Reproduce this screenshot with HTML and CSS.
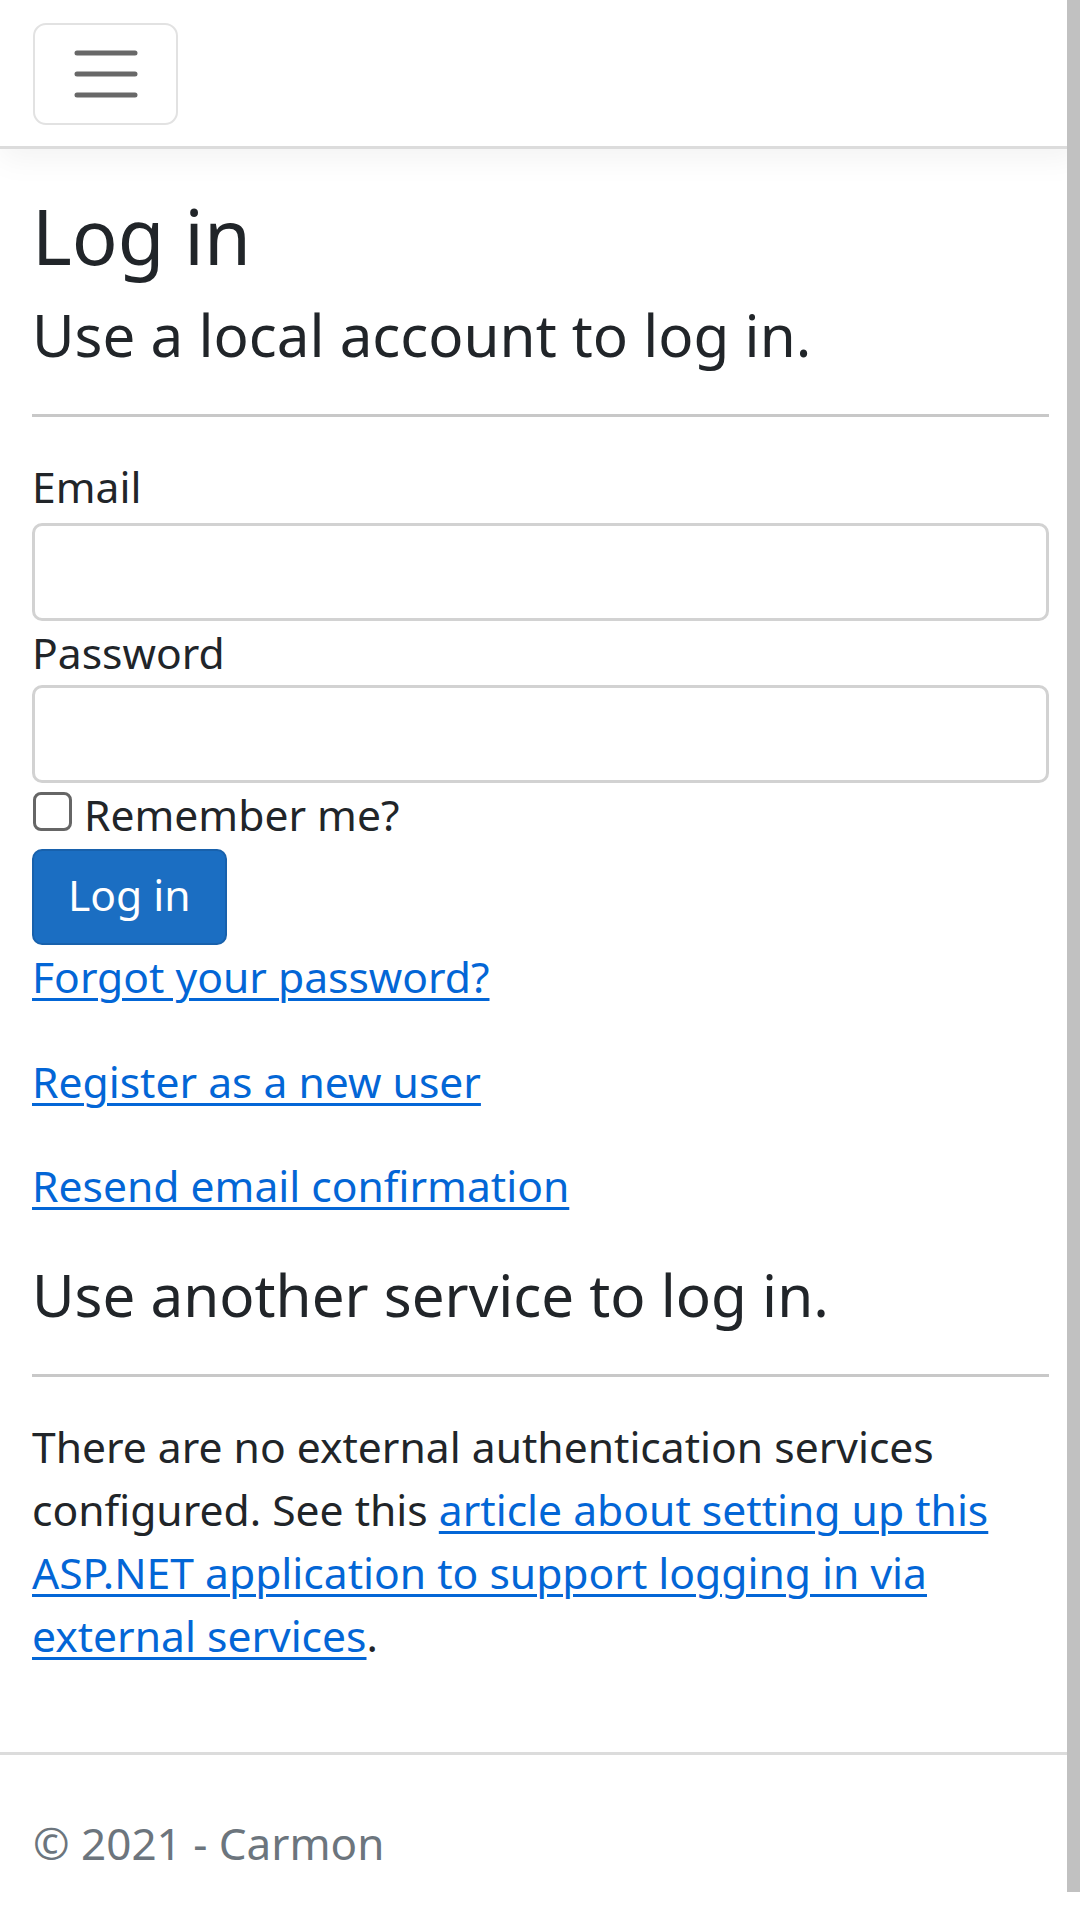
FILE: index.html
```html
<!DOCTYPE html>
<html lang="en">
  <head>
    <meta charset="UTF-8" />
    <meta name="viewport" content="width=device-width, initial-scale=1.0" />
    <title>Log in - Carmon</title>
    <link rel="stylesheet" href="styles.css">
  </head>
  <body>
    <nav class="navbar">
      <button class="navbar-toggler" type="button" aria-label="Toggle navigation">
        <svg width="64" height="52" viewBox="0 0 64 52">
          <path d="M3 5h58M3 26h58M3 47h58" stroke="#686868" stroke-width="5" stroke-linecap="round" />
        </svg>
      </button>
    </nav>

    <main class="container">
      <section class="local-login">
        <h1>Log in</h1>
        <h4>Use a local account to log in.</h4>
        <hr />
        <form onsubmit="event.preventDefault()">
          <label for="email" class="form-label">Email</label>
          <input type="email" id="email" class="form-control input-email" />
          <label for="password" class="form-label">Password</label>
          <input type="password" id="password" class="form-control input-password" />
          <div class="check-row">
            <input type="checkbox" id="remember" class="check-box" />
            <label for="remember">Remember me?</label>
          </div>
          <button type="submit" class="btn-primary">Log in</button>
          <p><a href="#">Forgot your password?</a></p>
          <p><a href="#">Register as a new user</a></p>
          <p><a href="#">Resend email confirmation</a></p>
        </form>
      </section>

      <section class="external-login">
        <h4>Use another service to log in.</h4>
        <hr />
        <p class="no-services">
          There are no external authentication services configured. See this
          <a href="#">article about setting up this ASP.NET application to support logging in via external services</a>.
        </p>
      </section>
    </main>

    <footer class="footer">&copy; 2021 - Carmon</footer>

    <div class="scroll-thumb"></div>
  </body>
</html>
```

FILE: styles.css
```css
* {
  box-sizing: border-box;
}

body {
  margin: 0;
  font-family: "Noto Sans", "Open Sans", Arial, sans-serif;
  font-size: 42.6px;
  line-height: 63px;
  color: #212529;
  background: #fff;
}

a {
  color: #0366d6;
  text-decoration: underline;
  text-underline-offset: 5px;
  text-decoration-thickness: 3px;
}

/* top bar */
.navbar {
  padding: 23px 0 21px 33px;
  border-bottom: 3px solid #dcdcdc;
  box-shadow: 0 10px 30px rgba(0, 0, 0, 0.05);
}

.navbar-toggler {
  display: flex;
  align-items: center;
  justify-content: center;
  width: 145px;
  height: 102px;
  padding: 0;
  background: transparent;
  border: 2px solid #e2e2e2;
  border-radius: 13px;
}

/* page body */
.container {
  padding: 41px 31px 0 32px;
}

h1 {
  margin: 0 0 18px;
  font-size: 76px;
  line-height: 91px;
  font-weight: 400;
}

h4 {
  margin: 0;
  font-size: 58.3px;
  line-height: 71px;
  font-weight: 400;
}

hr {
  margin: 44px 0 38px;
  height: 3px;
  border: none;
  background: #c8c8c8;
}

.form-label {
  display: block;
}

.form-control {
  display: block;
  width: 100%;
  height: 98px;
  padding: 0 31px;
  font: inherit;
  border: 3px solid #d2d2d2;
  border-radius: 10px;
  background: #fff;
}

.input-email {
  margin-top: 5px;
}

.input-password {
  margin-top: 1px;
}

.check-row {
  display: flex;
  align-items: flex-start;
  gap: 12px;
  padding-left: 1px;
}

.check-box {
  appearance: none;
  width: 39px;
  height: 39px;
  margin: 9px 0 0;
  border: 3px solid #666;
  border-radius: 8px;
  background: #fff;
}

.btn-primary {
  display: block;
  margin-top: 3px;
  padding: 12px 34px 17px;
  font: inherit;
  line-height: 63px;
  color: #fff;
  background: #1b6ec2;
  border: 2px solid #1861ac;
  border-radius: 10px;
}

p {
  margin: 0 0 41.6px;
}

.no-services {
  margin-bottom: 0;
}

.footer {
  margin-top: 85px;
  padding: 57px 0 0 33px;
  border-top: 3px solid #dcdcdc;
  color: #6c757d;
  font-size: 44px;
  white-space: nowrap;
}

/* overlay that mimics the browser scrollbar in the shot */
.scroll-thumb {
  position: fixed;
  top: 0;
  right: 0;
  width: 13px;
  height: 1892px;
  background: #c1c1c1;
}
```
